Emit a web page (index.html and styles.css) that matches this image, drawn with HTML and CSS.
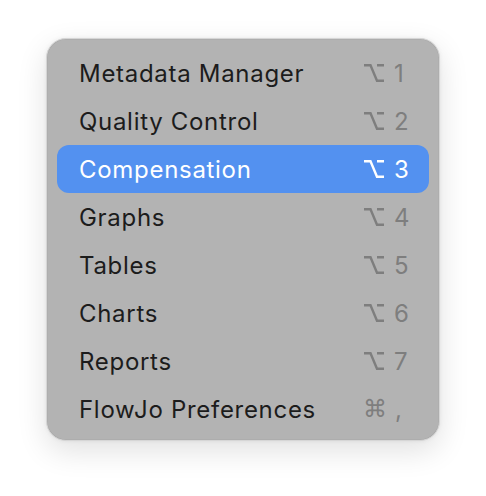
FILE: index.html
```html
<!DOCTYPE html>
<html>
<head>
<meta charset="utf-8">
<link rel="stylesheet" href="styles.css">
</head>
<body>
<div class="menu">
  <div class="item"><span class="label">Metadata Manager</span><span class="key"><svg class="opt" viewBox="0 0 20 18"><path d="M0 1.2H6.5L13 16.8H20M13 1.2H20"/></svg><span class="k">1</span></span></div>
  <div class="item"><span class="label">Quality Control</span><span class="key"><svg class="opt" viewBox="0 0 20 18"><path d="M0 1.2H6.5L13 16.8H20M13 1.2H20"/></svg><span class="k">2</span></span></div>
  <div class="item active"><span class="label">Compensation</span><span class="key"><svg class="opt" viewBox="0 0 20 18"><path d="M0 1.2H6.5L13 16.8H20M13 1.2H20"/></svg><span class="k">3</span></span></div>
  <div class="item"><span class="label">Graphs</span><span class="key"><svg class="opt" viewBox="0 0 20 18"><path d="M0 1.2H6.5L13 16.8H20M13 1.2H20"/></svg><span class="k">4</span></span></div>
  <div class="item"><span class="label">Tables</span><span class="key"><svg class="opt" viewBox="0 0 20 18"><path d="M0 1.2H6.5L13 16.8H20M13 1.2H20"/></svg><span class="k">5</span></span></div>
  <div class="item"><span class="label">Charts</span><span class="key"><svg class="opt" viewBox="0 0 20 18"><path d="M0 1.2H6.5L13 16.8H20M13 1.2H20"/></svg><span class="k">6</span></span></div>
  <div class="item"><span class="label">Reports</span><span class="key"><svg class="opt" viewBox="0 0 20 18"><path d="M0 1.2H6.5L13 16.8H20M13 1.2H20"/></svg><span class="k">7</span></span></div>
  <div class="item"><span class="label">FlowJo Preferences</span><span class="key"><span class="cmd">⌘</span><span class="k comma">,</span></span></div>
</div>
</body>
</html>
```

FILE: styles.css
```css
html, body {
  margin: 0;
  padding: 0;
  background: #ffffff;
}
body {
  width: 486px;
  height: 496px;
  font-family: Inter, "Liberation Sans", sans-serif;
}
.menu {
  position: relative;
  margin: 38px 0 0 46px;
  width: 394px;
  height: 403px;
  box-sizing: border-box;
  padding: 10px 10px 0 10px;
  background: #b3b3b3;
  border-radius: 20px;
  border: 1px solid #d6d6d6;
  box-shadow: 0 0 0 0.5px #a8a8a8 inset, 0 10px 30px rgba(0,0,0,0.12), 0 0 4px rgba(0,0,0,0.06);
}
.item {
  height: 48px;
  display: flex;
  align-items: center;
  justify-content: space-between;
  padding: 0 21px 0 22px;
  border-radius: 12px;
  font-size: 24px;
  letter-spacing: 0.7px;
  color: #1c1c1c;
}
.item.active {
  background: #5391f0;
  color: #ffffff;
}
.key {
  display: flex;
  align-items: center;
  color: #7e7e7e;
  letter-spacing: 0;
}
.item.active .key {
  color: #ffffff;
}
.opt {
  width: 20px;
  height: 18px;
  margin-right: 10px;
  fill: none;
  stroke: currentColor;
  stroke-width: 2.4;
}
.k {
  display: inline-block;
  width: 14px;
  text-align: left;
}
.cmd {
  font-family: "DejaVu Sans", sans-serif;
  font-size: 24px;
  margin-right: 8px;
}
.comma {
  width: 13px;
}
```
